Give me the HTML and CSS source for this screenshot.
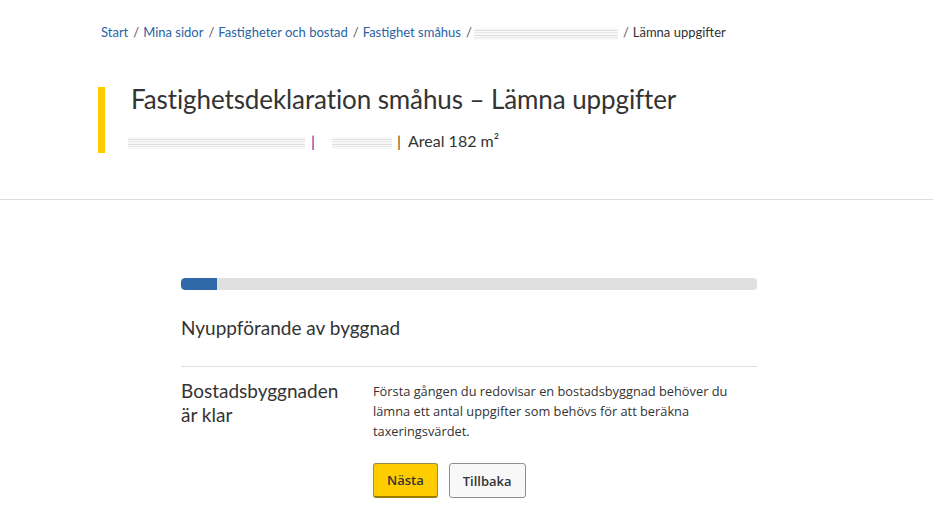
FILE: index.html
```html
<!DOCTYPE html>
<html lang="sv">
<head>
  <meta charset="UTF-8" />
  <title>Fastighetsdeklaration småhus – Lämna uppgifter</title>
  <link rel="stylesheet" href="styles.css">
</head>
<body>
  <header class="page-header">
    <nav class="breadcrumb"><a href="#">Start</a><span class="sep">/</span><a href="#">Mina sidor</a><span class="sep">/</span><a href="#">Fastigheter och bostad</a><span class="sep">/</span><a href="#">Fastighet småhus</a><span class="sep">/</span><span class="redacted crumb-redacted" aria-hidden="true"></span><span class="sep">/</span><span class="current">Lämna uppgifter</span></nav>

    <div class="title-block">
      <h1>Fastighetsdeklaration småhus – Lämna uppgifter</h1>
      <p class="subtitle"><span class="redacted sub-one" aria-hidden="true"></span><span class="bar bar-purple">|</span><span class="redacted sub-two" aria-hidden="true"></span><span class="bar">|</span><span>Areal 182 m²</span></p>
    </div>
  </header>

  <main class="form-area">
    <div class="progress"><div class="progress-fill" style="width:6.3%"></div></div>

    <h2 class="step-title">Nyuppförande av byggnad</h2>

    <section class="step-row">
      <h3>Bostadsbyggnaden är klar</h3>
      <div class="step-body">
        <p>Första gången du redovisar en bostadsbyggnad behöver du lämna ett antal uppgifter som behövs för att beräkna taxeringsvärdet.</p>
        <div class="actions">
          <button class="btn btn-primary">Nästa</button>
          <button class="btn">Tillbaka</button>
        </div>
      </div>
    </section>
  </main>
</body>
</html>
```

FILE: styles.css
```css
:root {
  --link-blue: #2a63a4;
  --text-dark: #333;
  --line-grey: #dedede;
  --accent-yellow: #ffcc00;
  --progress-blue: #2f69a8;
}
body {
  margin: 0;
  background: #fff;
  color: var(--text-dark);
  font-family: Lato, 'Open Sans', sans-serif;
}
.page-header {
  border-bottom: 1px solid #dcdcdc;
  padding: 24px 0 46px 101px;
}
.breadcrumb {
  font-size: 13px;
  line-height: 16px;
  white-space: nowrap;
}
.breadcrumb a {
  color: var(--link-blue);
  text-decoration: none;
}
.breadcrumb .sep {
  color: #555;
  margin: 0 4px 0 5px;
}
.breadcrumb .current {
  color: var(--text-dark);
}
/* blurred-out personal data */
.redacted {
  display: inline-block;
  height: 12px;
  vertical-align: middle;
  background: repeating-linear-gradient(to bottom, #f7f7f7 0 2px, #d9d9d9 2px 3px, #fbfbfb 3px 4px, #e4e4e4 4px 5px);
  filter: blur(0.5px);
  opacity: 0.85;
}
.crumb-redacted {
  width: 144px;
  margin-left: -2px;
}
.title-block {
  margin: 47px 0 0 -3px;
  border-left: 7px solid var(--accent-yellow);
  padding: 0 0 0 26px;
  height: 66px;
}
.title-block h1 {
  margin: 0;
  font-size: 26px;
  font-weight: 400;
  line-height: 24px;
  letter-spacing: -0.1px;
}
.subtitle {
  margin: 20px 0 0 -3px;
  font-size: 16px;
  line-height: 20px;
}
.sub-one {
  width: 177px;
}
.sub-two {
  width: 60px;
  margin-left: 17px;
}
.bar {
  color: #6b4a22;
  margin: 0 7px 0 5px;
}
.bar-purple {
  color: #6a1fb0;
  margin: 0 0 0 6px;
}
.form-area {
  width: 576px;
  margin: 78px 0 0 181px;
}
.progress {
  height: 12px;
  border-radius: 4px;
  background: #e0e0e0;
  overflow: hidden;
}
.progress-fill {
  height: 100%;
  background: var(--progress-blue);
  border-radius: 4px 0 0 4px;
}
.step-title {
  margin: 26px 0 0;
  padding-bottom: 26px;
  border-bottom: 1px solid var(--line-grey);
  font-size: 19px;
  font-weight: 400;
  line-height: 24px;
}
.step-row {
  display: flex;
  padding-top: 12px;
}
.step-row h3 {
  width: 170px;
  margin: 0 22px 0 0;
  font-size: 19px;
  font-weight: 400;
  line-height: 24px;
}
.step-body {
  flex: 1;
  padding-top: 2px;
}
.step-body p {
  margin: 0;
  font-family: 'Open Sans', sans-serif;
  font-size: 12.8px;
  line-height: 20px;
  max-width: 370px;
}
.actions {
  display: flex;
  gap: 11px;
  margin-top: 22px;
}
.btn {
  height: 35px;
  padding: 0 13px;
  border: 1px solid #8f8f8f;
  border-radius: 3px;
  background: #f8f8f8;
  color: var(--text-dark);
  font-family: 'Open Sans', sans-serif;
  font-size: 13px;
  font-weight: 600;
  cursor: pointer;
}
.btn-primary {
  background: var(--accent-yellow);
  border-color: #9a8a4a;
  border-bottom: 2px solid #9a7c00;
}
```
